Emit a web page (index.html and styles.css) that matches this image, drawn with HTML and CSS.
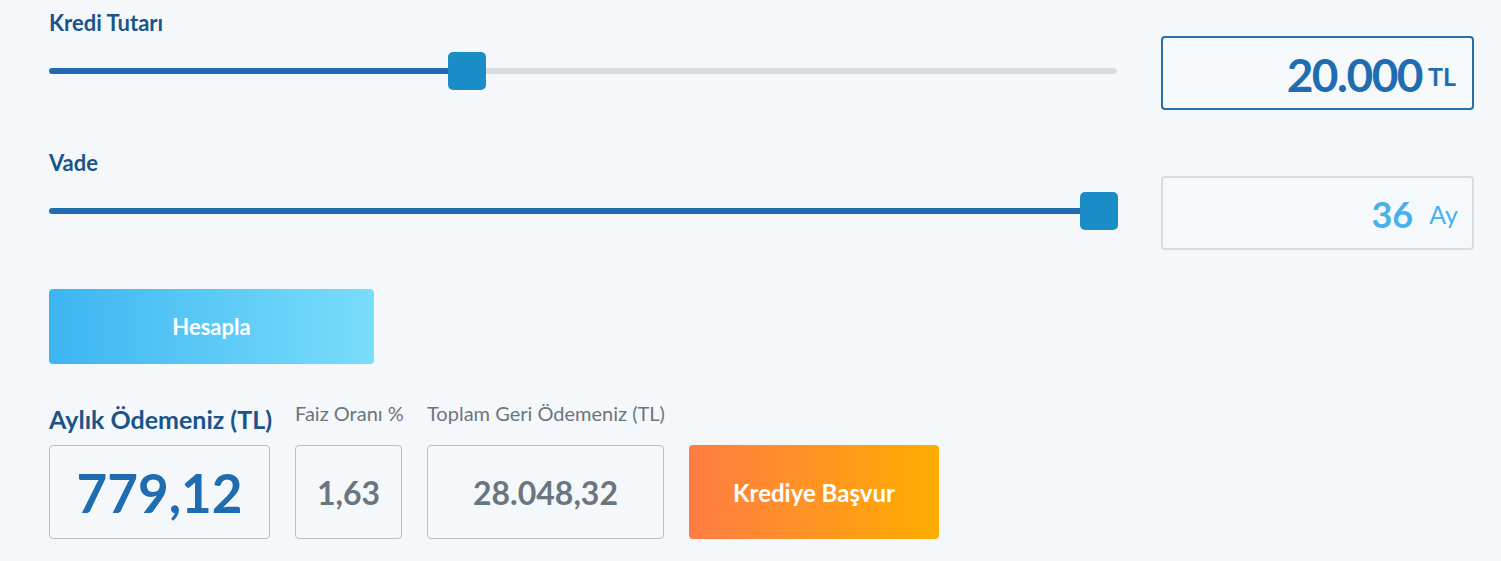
FILE: index.html
```html
<!DOCTYPE html>
<html lang="tr">
<head>
    <meta charset="UTF-8">
    <title>Kredi Hesaplama</title>
    <link rel="stylesheet" href="styles.css">
</head>
<body>
    <div class="calculator">
        <div class="row">
            <div class="field">
                <label class="field-label">Kredi Tutarı</label>
                <div class="slider">
                    <div class="track"><div class="fill" style="width: 39%"></div></div>
                    <div class="thumb" style="left: 399px"></div>
                </div>
            </div>
            <div class="value-box active">
                <span class="value">20.000</span><span class="unit">TL</span>
            </div>
        </div>

        <div class="row">
            <div class="field">
                <label class="field-label">Vade</label>
                <div class="slider">
                    <div class="track"><div class="fill" style="width: 100%"></div></div>
                    <div class="thumb" style="left: 1031px"></div>
                </div>
            </div>
            <div class="value-box light">
                <span class="value">36</span><span class="unit">Ay</span>
            </div>
        </div>

        <button class="btn btn-calc">Hesapla</button>

        <div class="results">
            <div class="result monthly">
                <div class="result-label main">Aylık Ödemeniz (TL)</div>
                <div class="result-box">779,12</div>
            </div>
            <div class="result rate">
                <div class="result-label">Faiz Oranı %</div>
                <div class="result-box">1,63</div>
            </div>
            <div class="result total">
                <div class="result-label">Toplam Geri Ödemeniz (TL)</div>
                <div class="result-box">28.048,32</div>
            </div>
            <div class="result apply">
                <div class="result-label"></div>
                <button class="btn btn-apply">Krediye Başvur</button>
            </div>
        </div>
    </div>
</body>
</html>
```

FILE: styles.css
```css
body, html {
    margin: 0;
    padding: 0;
    background: #f4f8fb;
    font-family: Lato, "Open Sans", sans-serif;
}

.calculator {
    padding: 12px 0 0 49px;
    width: 1425px;
}

.row {
    display: flex;
    gap: 44px;
    align-items: flex-end;
}

.row + .row {
    margin-top: 42px;
}

.field {
    width: 1068px;
}

.field-label {
    display: block;
    color: #1a5489;
    font-size: 22px;
    line-height: 22px;
    font-weight: bold;
}

.slider {
    position: relative;
    height: 38px;
    margin-top: 18px;
    margin-bottom: 20px;
}

.track {
    position: absolute;
    top: 16px;
    left: 0;
    right: 0;
    height: 6px;
    border-radius: 3px;
    background: #d5dde3;
}

.fill {
    height: 100%;
    background: #1f6db0;
    border-radius: 3px;
}

.thumb {
    position: absolute;
    top: 0;
    width: 38px;
    height: 38px;
    border-radius: 5px;
    background: #1a8dc6;
}

.value-box {
    box-sizing: border-box;
    width: 313px;
    height: 74px;
    border-radius: 4px;
    display: flex;
    align-items: flex-start;
    justify-content: flex-end;
    background: #f6f9fc;
}

.value-box.active {
    border: 2px solid #2a6ea8;
    color: #1f6db0;
    padding: 14px 16px 0 0;
}

.value-box.light {
    border: 2px solid #d6dde2;
    color: #47b2e9;
    padding: 18px 14px 0 0;
}

.value {
    font-size: 46px;
    line-height: 46px;
    font-weight: bold;
    letter-spacing: -1.5px;
}

.unit {
    font-size: 25px;
    line-height: 25px;
    font-weight: bold;
    margin: 12px 0 0 6px;
}

.light .value {
    font-size: 36px;
    line-height: 36px;
    letter-spacing: 0;
}

.light .unit {
    font-size: 25px;
    line-height: 25px;
    font-weight: normal;
    margin: 6px 0 0 16px;
}

.btn {
    border: none;
    border-radius: 4px;
    color: #fff;
    font-family: Lato, "Open Sans", sans-serif;
    font-weight: bold;
    cursor: pointer;
}

.btn-calc {
    display: block;
    width: 325px;
    height: 75px;
    margin-top: 39px;
    font-size: 22px;
    background: linear-gradient(to right, #3db5f1, #79ddfb);
}

.results {
    display: flex;
    gap: 25px;
    margin-top: 31px;
}

.result {
    flex: none;
}

.result.monthly { width: 221px; }
.result.rate { width: 107px; }
.result.total { width: 237px; }
.result.apply { width: 250px; }

.result-label {
    box-sizing: border-box;
    height: 50px;
    padding-top: 8px;
    white-space: nowrap;
    color: #6b7580;
    font-size: 20px;
    line-height: 20px;
}

.result-label.main {
    padding-top: 12px;
    color: #1a5489;
    font-size: 25px;
    line-height: 24px;
    font-weight: bold;
}

.result-box {
    box-sizing: border-box;
    height: 94px;
    border: 1px solid #b7bec4;
    border-radius: 4px;
    display: flex;
    align-items: center;
    justify-content: center;
    color: #6b7580;
    font-size: 32px;
    font-weight: bold;
}

.monthly .result-box {
    color: #1f6db0;
    font-size: 53px;
}

.btn-apply {
    width: 250px;
    height: 94px;
    font-size: 24px;
    background: linear-gradient(to right, #ff7b45, #ffad00);
}
```
